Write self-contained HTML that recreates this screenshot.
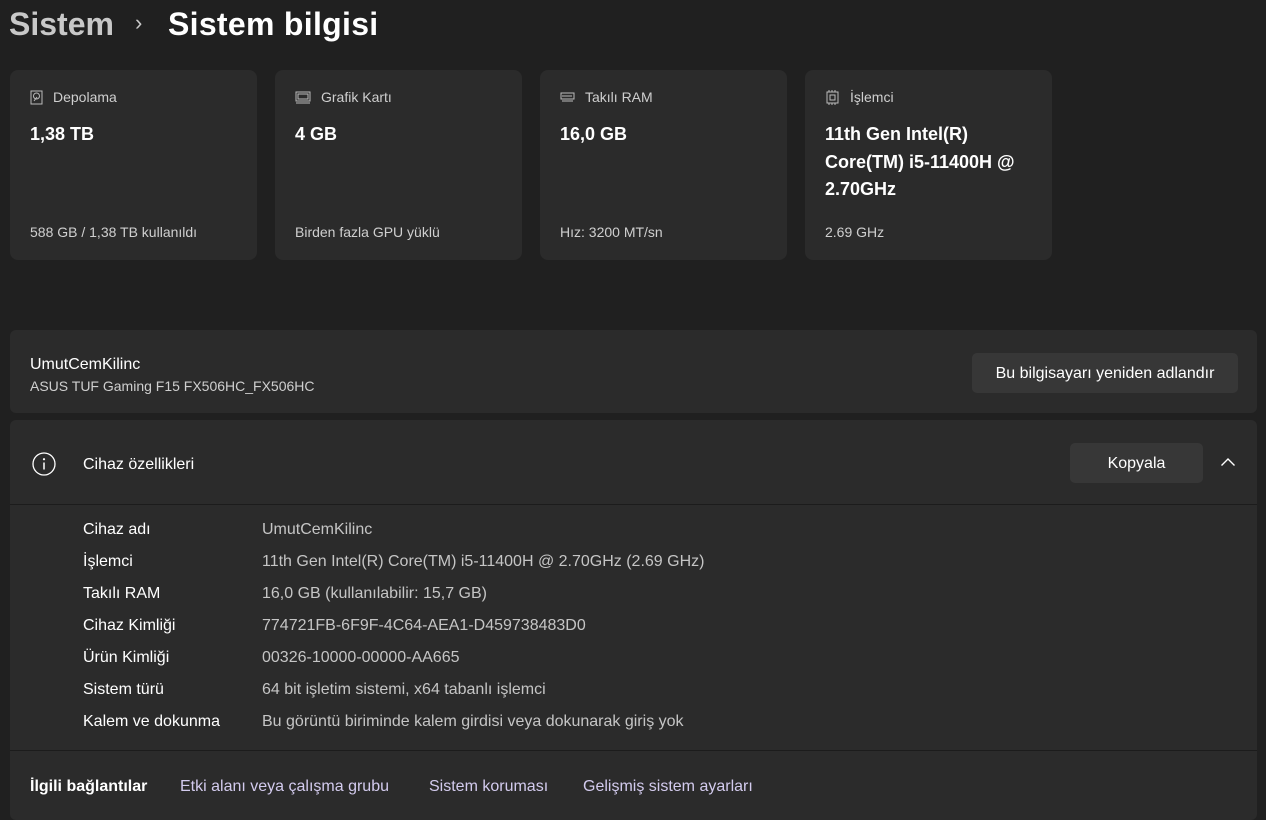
<!DOCTYPE html>
<html><head><meta charset="utf-8"><style>
*{margin:0;padding:0;box-sizing:border-box}
body{width:1266px;height:817px;overflow:hidden;background:#202020;font-family:"Liberation Sans",sans-serif;color:#fff;position:relative}
.a{position:absolute;white-space:nowrap}
.card{position:absolute;top:70px;width:247px;height:190px;background:#2b2b2b;border-radius:8px}
.card .h{position:absolute;left:20px;top:19px;font-size:14px;color:#cfcfcf;display:flex;align-items:center;gap:10px}
.card .v{position:absolute;left:20px;top:51px;font-size:18px;font-weight:bold;line-height:27.5px}
.card .s{position:absolute;left:20px;top:154px;font-size:14px;color:#cfcfcf}
.btn{position:absolute;background:#373737;border-radius:5px;font-size:16px;display:flex;align-items:center;justify-content:center;padding-top:2px}
.row{position:absolute;left:83px;font-size:16px;color:#fff}
.val{position:absolute;left:262px;font-size:16px;color:#c5c5c5}
</style></head><body>
<div class="a" style="left:9px;top:6px;font-size:32px;color:#c8c8c8;font-weight:bold">Sistem</div>
<div class="a" style="left:135px;top:10px;font-size:22px;color:#c8c8c8">›</div>
<div class="a" style="left:168px;top:6px;font-size:32px;font-weight:bold;letter-spacing:0.3px">Sistem bilgisi</div>

<div class="card" style="left:10px"><div class="h"><svg width="13" height="15" viewBox="0 0 13 15"><rect x="1" y="1" width="11" height="13" fill="none" stroke="#bbb"/><circle cx="6.5" cy="6" r="3" fill="none" stroke="#bbb"/><path d="M4 11l3-4" stroke="#bbb"/></svg>Depolama</div><div class="v">1,38 TB</div><div class="s">588 GB / 1,38 TB kullanıldı</div></div>
<div class="card" style="left:275px"><div class="h"><svg width="16" height="13" viewBox="0 0 16 13"><rect x="1" y="1" width="14" height="9" fill="none" stroke="#bbb"/><rect x="3" y="3" width="10" height="5" fill="none" stroke="#bbb"/><path d="M1 12h14" stroke="#bbb"/></svg>Grafik Kartı</div><div class="v">4 GB</div><div class="s">Birden fazla GPU yüklü</div></div>
<div class="card" style="left:540px"><div class="h"><svg width="15" height="10" viewBox="0 0 15 10"><rect x="1" y="1" width="13" height="6" fill="none" stroke="#bbb"/><path d="M3 3v2M5 3v2M7 3v2M9 3v2M11 3v2M2 9h11" stroke="#bbb"/></svg>Takılı RAM</div><div class="v">16,0 GB</div><div class="s">Hız: 3200 MT/sn</div></div>
<div class="card" style="left:805px"><div class="h"><svg width="15" height="15" viewBox="0 0 15 15"><rect x="2" y="2" width="11" height="11" fill="none" stroke="#bbb"/><rect x="5" y="5" width="5" height="5" fill="none" stroke="#bbb"/><path d="M4 0v2M7 0v2M10 0v2M4 13v2M7 13v2M10 13v2" stroke="#bbb"/></svg>İşlemci</div><div class="v">11th Gen Intel(R)<br>Core(TM) i5-11400H @<br>2.70GHz</div><div class="s">2.69 GHz</div></div>

<div class="a" style="left:10px;top:330px;width:1247px;height:83px;background:#2b2b2b;border-radius:6px"></div>
<div class="a" style="left:30px;top:356px;font-size:16px">UmutCemKilinc</div>
<div class="a" style="left:30px;top:378px;font-size:14px;color:#cfcfcf">ASUS TUF Gaming F15 FX506HC_FX506HC</div>
<div class="btn" style="left:972px;top:353px;width:266px;height:40px">Bu bilgisayarı yeniden adlandır</div>

<div class="a" style="left:10px;top:420px;width:1247px;height:400px;background:#2b2b2b;border-radius:6px"></div>
<div class="a" style="left:10px;top:504px;width:1247px;height:1px;background:#1c1c1c"></div>
<div class="a" style="left:10px;top:750px;width:1247px;height:1px;background:#1c1c1c"></div>
<svg class="a" style="left:32px;top:452px" width="24" height="24" viewBox="0 0 24 24"><circle cx="12" cy="12" r="11" fill="none" stroke="#fff" stroke-width="1.3"/><circle cx="12" cy="7.2" r="1.1" fill="#fff"/><path d="M12 10.5v7" stroke="#fff" stroke-width="1.5"/></svg>
<div class="a" style="left:83px;top:456px;font-size:16px">Cihaz özellikleri</div>
<div class="btn" style="left:1070px;top:443px;width:133px;height:40px">Kopyala</div>
<svg class="a" style="left:1220px;top:456px" width="16" height="12" viewBox="0 0 16 12"><path d="M1.5 9.5L8 3l6.5 6.5" fill="none" stroke="#fff" stroke-width="1.4"/></svg>

<div class="row" style="top:521px">Cihaz adı</div><div class="val" style="top:521px">UmutCemKilinc</div>
<div class="row" style="top:553px">İşlemci</div><div class="val" style="top:553px">11th Gen Intel(R) Core(TM) i5-11400H @ 2.70GHz (2.69 GHz)</div>
<div class="row" style="top:585px">Takılı RAM</div><div class="val" style="top:585px">16,0 GB (kullanılabilir: 15,7 GB)</div>
<div class="row" style="top:617px">Cihaz Kimliği</div><div class="val" style="top:617px">774721FB-6F9F-4C64-AEA1-D459738483D0</div>
<div class="row" style="top:649px">Ürün Kimliği</div><div class="val" style="top:649px">00326-10000-00000-AA665</div>
<div class="row" style="top:681px">Sistem türü</div><div class="val" style="top:681px">64 bit işletim sistemi, x64 tabanlı işlemci</div>
<div class="row" style="top:713px">Kalem ve dokunma</div><div class="val" style="top:713px">Bu görüntü biriminde kalem girdisi veya dokunarak giriş yok</div>

<div class="a" style="left:30px;top:778px;font-size:16px;font-weight:bold">İlgili bağlantılar</div>
<div class="a" style="left:180px;top:778px;font-size:16px;color:#d3cbee">Etki alanı veya çalışma grubu</div>
<div class="a" style="left:429px;top:778px;font-size:16px;color:#d3cbee">Sistem koruması</div>
<div class="a" style="left:583px;top:778px;font-size:16px;color:#d3cbee">Gelişmiş sistem ayarları</div>
</body></html>
